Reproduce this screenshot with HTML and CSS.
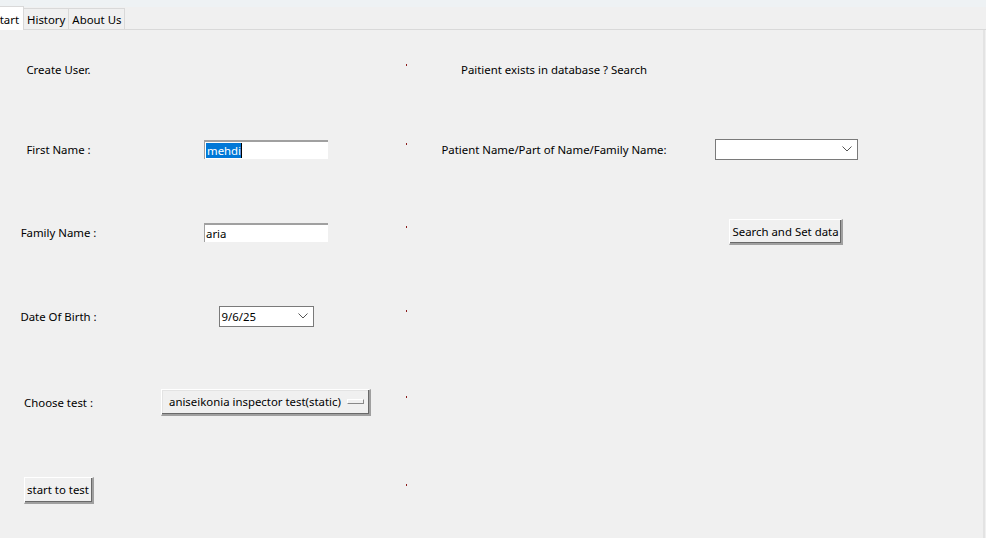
FILE: index.html
```html
<!DOCTYPE html>
<html>
<head>
<meta charset="utf-8">
<link rel="stylesheet" href="styles.css">
</head>
<body>
<div class="topstrip"></div>
<div class="tabbar">
  <div class="tab tab-active">tart</div>
  <div class="tab">History</div>
  <div class="tab">About Us</div>
</div>
<div class="content">
  <div class="grid">
    <!-- row 0 -->
    <div class="cell c0 r0"><span class="lbl">Create User.</span></div>
    <div class="cell c2 r0"><span class="dot"></span></div>
    <div class="cell c3 r0"><span class="lbl">Paitient exists in database ? Search</span></div>

    <!-- row 1 -->
    <div class="cell c0 r1"><span class="lbl">First Name :</span></div>
    <div class="cell c1 r1"><div class="entry"><span class="sel">mehdi</span><span class="caret"></span></div></div>
    <div class="cell c2 r1"><span class="dot"></span></div>
    <div class="cell c3 r1"><span class="lbl">Patient Name/Part of Name/Family Name:</span></div>
    <div class="cell c4 r1">
      <div class="combo combo-wide">
        <span class="combo-text"></span>
        <svg class="chev" width="10" height="6" viewBox="0 0 10 6"><path d="M0.5 0.5 L5 5 L9.5 0.5" fill="none" stroke="#555" stroke-width="1"/></svg>
      </div>
    </div>

    <!-- row 2 -->
    <div class="cell c0 r2"><span class="lbl">Family Name :</span></div>
    <div class="cell c1 r2"><div class="entry"><span>aria</span></div></div>
    <div class="cell c2 r2"><span class="dot"></span></div>
    <div class="cell c4 r2"><button class="btn btn-search">Search and Set data</button></div>

    <!-- row 3 -->
    <div class="cell c0 r3"><span class="lbl">Date Of Birth :</span></div>
    <div class="cell c1 r3">
      <div class="combo combo-date">
        <span class="combo-text">9/6/25</span>
        <svg class="chev" width="10" height="6" viewBox="0 0 10 6"><path d="M0.5 0.5 L5 5 L9.5 0.5" fill="none" stroke="#555" stroke-width="1"/></svg>
      </div>
    </div>
    <div class="cell c2 r3"><span class="dot"></span></div>

    <!-- row 4 -->
    <div class="cell c0 r4"><span class="lbl">Choose test :</span></div>
    <div class="cell c1 r4">
      <div class="optmenu"><span>aniseikonia inspector test(static)</span><span class="indicator"></span></div>
    </div>
    <div class="cell c2 r4"><span class="dot"></span></div>

    <!-- row 5 -->
    <div class="cell c0 r5"><button class="btn btn-start">start to test</button></div>
    <div class="cell c2 r5"><span class="dot"></span></div>
  </div>
</div>
</body>
</html>
```
FILE: styles.css
```css
* { box-sizing: border-box; }
html, body {
  margin: 0;
  padding: 0;
  width: 986px;
  height: 538px;
  overflow: hidden;
  background: #f0f0f0;
  font-family: "Noto Sans", "Open Sans", sans-serif;
  font-size: 11.4px;
  color: #000;
}
.topstrip {
  height: 7px;
  background: #eef2f4;
}
.tabbar {
  height: 23px;
  display: flex;
  align-items: flex-end;
  border-bottom: 1px solid #d9d9d9;
  background: #f0f0f0;
}
.tab {
  height: 21px;
  padding: 2px 3px 0 3px;
  display: flex;
  align-items: center;
  border: 1px solid #d9d9d9;
  border-bottom: none;
  margin-left: -1px;
  background: #f0f0f0;
  line-height: 1;
  white-space: nowrap;
}
.tab-active {
  height: 24px;
  margin-bottom: -1px;
  background: #ffffff;
  width: 24px;
  justify-content: flex-end;
  padding: 3px 4px 0 0;
  margin-left: 0;
  border-left: none;
  overflow: hidden;
}
.content {
  height: 508px;
  border-right: 2px solid #e3e3e3;
  margin-right: 1px;
}
.grid {
  display: grid;
  grid-template-columns: 117px 289px 1px 294px 170px;
  grid-template-rows: 79px 80px 86px 82px 90px 86px;
}
.cell {
  display: flex;
  align-items: center;
  justify-content: center;
  min-width: 0;
}
.c0 { grid-column: 1; }
.c1 { grid-column: 2; padding-left: 9px; }
.c2 { grid-column: 3; overflow: visible; }
.c3 { grid-column: 4; }
.c4 { grid-column: 5; }
.r0 { grid-row: 1; }
.r1 { grid-row: 2; }
.r2 { grid-row: 3; }
.r3 { grid-row: 4; }
.r4 { grid-row: 5; }
.r5 { grid-row: 6; }
.lbl { white-space: nowrap; }
.dot {
  display: block;
  width: 1px;
  height: 2px;
  background: #8b1a1a;
  margin-top: -10px;
}
.entry {
  width: 124px;
  height: 19px;
  background: #fff;
  border-top: 2px solid #a0a0a0;
  border-left: 1px solid #a0a0a0;
  display: flex;
  align-items: center;
  padding-left: 1px;
  white-space: nowrap;
  line-height: 15px;
}
.sel {
  background: #0078d7;
  color: #fff;
  padding: 0 0 0 1px;
  height: 15px;
}
.caret {
  display: inline-block;
  width: 1px;
  height: 15px;
  background: #000;
}
.combo {
  background: #fff;
  border: 1px solid #7a7a7a;
  display: flex;
  align-items: center;
  justify-content: space-between;
  padding: 0 5px 0 2px;
  white-space: nowrap;
}
.combo-wide { width: 143px; height: 21px; }
.combo-date { width: 95px; height: 21px; }
.chev { display: block; }
.optmenu {
  width: 210px;
  height: 27px;
  background: #f0f0f0;
  border-top: 1px solid #ffffff;
  border-left: 1px solid #ffffff;
  border-right: 2px solid #a0a0a0;
  border-bottom: 2px solid #a0a0a0;
  box-shadow: inset -1px -1px 0 #696969, inset 1px 1px 0 #e3e3e3;
  display: flex;
  align-items: center;
  justify-content: space-between;
  padding: 0 5px 0 7px;
  white-space: nowrap;
}
.indicator {
  width: 17px;
  height: 5px;
  border-top: 1px solid #fff;
  border-left: 1px solid #fff;
  border-right: 1px solid #888;
  border-bottom: 1px solid #888;
  background: #f0f0f0;
}
.btn {
  font-family: inherit;
  font-size: 11.4px;
  color: #000;
  background: #f0f0f0;
  border-top: 1px solid #ffffff;
  border-left: 1px solid #ffffff;
  border-right: 2px solid #a0a0a0;
  border-bottom: 2px solid #a0a0a0;
  box-shadow: inset -1px -1px 0 #696969;
  padding: 0;
  margin: 0;
  white-space: nowrap;
  line-height: 1;
}
.btn-start { width: 70px; height: 27px; }
.btn-search { width: 114px; height: 26px; }
```
